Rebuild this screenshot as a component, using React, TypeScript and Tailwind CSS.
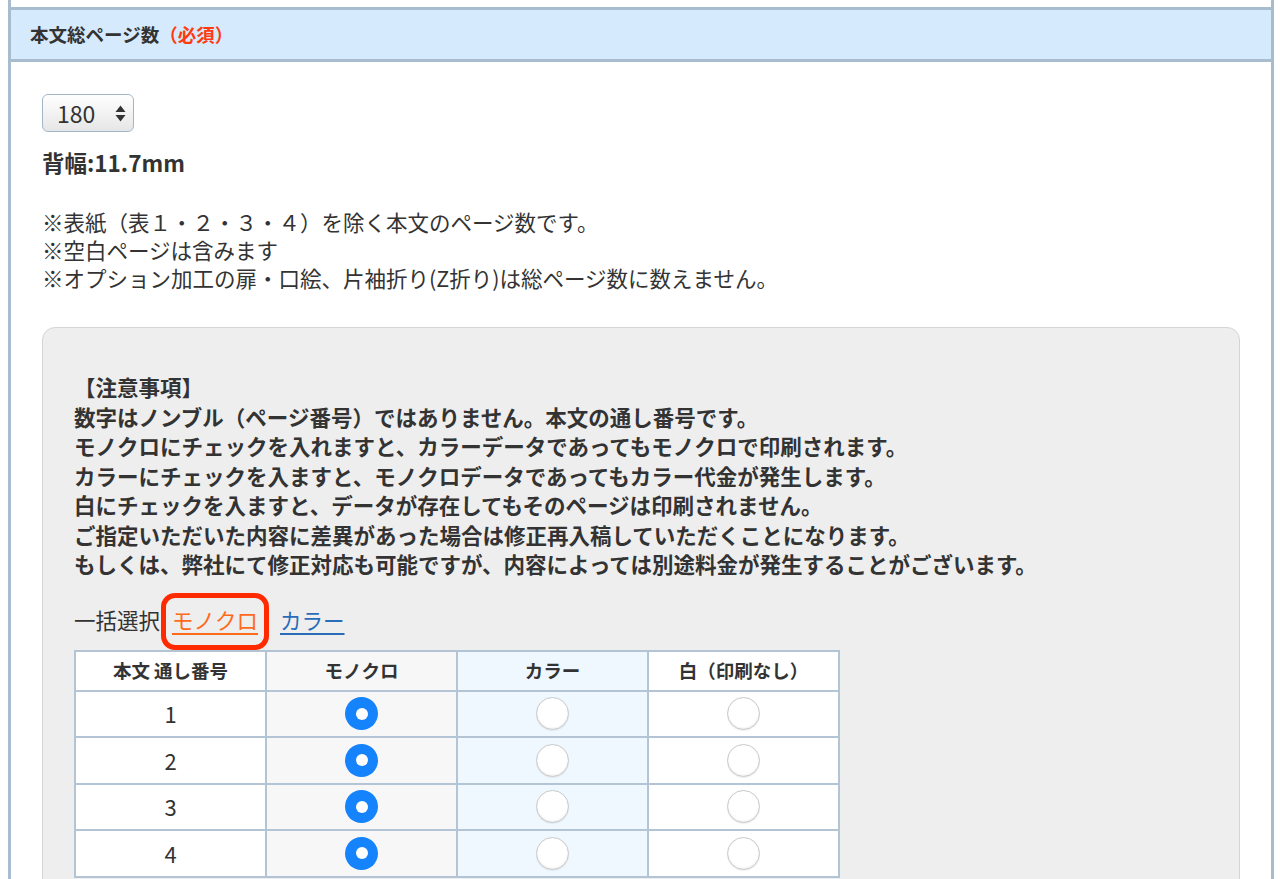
import clsx from 'clsx';

const notes = [
  '※表紙（表１・２・３・４）を除く本文のページ数です。',
  '※空白ページは含みます',
  '※オプション加工の扉・口絵、片袖折り(Z折り)は総ページ数に数えません。',
];

const cautions = [
  '【注意事項】',
  '数字はノンブル（ページ番号）ではありません。本文の通し番号です。',
  'モノクロにチェックを入れますと、カラーデータであってもモノクロで印刷されます。',
  'カラーにチェックを入ますと、モノクロデータであってもカラー代金が発生します。',
  '白にチェックを入ますと、データが存在してもそのページは印刷されません。',
  'ご指定いただいた内容に差異があった場合は修正再入稿していただくことになります。',
  'もしくは、弊社にて修正対応も可能ですが、内容によっては別途料金が発生することがございます。',
];

const columns = [
  { label: '本文 通し番号', bg: 'bg-white' },
  { label: 'モノクロ', bg: 'bg-[#f7f7f7]' },
  { label: 'カラー', bg: 'bg-[#eff7ff]' },
  { label: '白（印刷なし）', bg: 'bg-white' },
];

export default function App() {
  return (
    <div className="min-h-screen bg-white font-['Noto_Sans_CJK_JP','Hiragino_Sans',sans-serif] text-[#333]">
      <div className="ml-2 mr-[6px] border-x-[3px] border-[#a9bccd]">
        <div className="h-[7px] bg-white" />
        <div className="flex h-[55px] items-center border-y-[3px] border-[#a9bccd] bg-[#d6eafd] px-[19px] text-[18.5px] font-bold">
          本文総ページ数<span className="text-[#ff3a10]">（必須）</span>
        </div>
        <div className="px-[31px] pb-10 pt-8">
          <PageSelect value="180" />
          <div className="mt-[15px] text-[22.5px] font-bold leading-[30px]">背幅:11.7mm</div>
          <div className="mt-[31px] text-[21.5px] leading-[28px]">
            {notes.map(n => (
              <div key={n}>{n}</div>
            ))}
          </div>
          <CautionBox />
        </div>
      </div>
    </div>
  );
}

function PageSelect(props: { value: string }) {
  return (
    <div className="flex h-[38px] w-[92px] items-center justify-between rounded-[6px] border border-[#a3b6c8] bg-gradient-to-b from-white to-[#e6e6e6] pl-[14px] pr-[7px] shadow-[inset_0_1px_0_white]">
      <span className="text-[23px] leading-none">{props.value}</span>
      <svg width="11" height="17" viewBox="0 0 11 17" className="text-[#333]">
        <path d="M5.5 0.5 L10.5 7 L0.5 7 Z" fill="currentColor" />
        <path d="M0.5 10 L10.5 10 L5.5 16.5 Z" fill="currentColor" />
      </svg>
    </div>
  );
}

function CautionBox() {
  return (
    <div className="mt-[35px] rounded-[13px] border border-[#d5d5d5] bg-[#eeeeee] px-[31px] pb-10 pt-[44px]">
      <div className="text-[21.5px] font-bold leading-[29.5px]">
        {cautions.map(c => (
          <div key={c}>{c}</div>
        ))}
      </div>
      <div className="mt-[27px] flex items-center text-[21.5px] leading-[28px]">
        <span>一括選択:</span>
        <span className="relative ml-[6px]">
          <a href="#" className="text-[#ff6a1a] underline underline-offset-[4px]">
            モノクロ
          </a>
          <span className="pointer-events-none absolute -inset-x-[11px] -bottom-[16px] -top-[13px] rounded-[14px] border-[5px] border-[#ff2a00]" />
        </span>
        <a href="#" className="ml-[22px] text-[#2a6cba] underline underline-offset-[4px]">
          カラー
        </a>
      </div>
      <table className="mt-[16px] w-[766px] table-fixed border-collapse">
        <thead>
          <tr className="h-[40px]">
            {columns.map(col => (
              <th
                key={col.label}
                className={clsx('border-2 border-[#b3c4d5] text-[18.5px] font-bold', col.bg)}
              >
                {col.label}
              </th>
            ))}
          </tr>
        </thead>
        <tbody>
          {[1, 2, 3, 4].map(n => (
            <tr key={n} className="h-[46.5px]">
              <td className="border-2 border-[#b3c4d5] bg-white text-center text-[22px]">{n}</td>
              <td className="border-2 border-[#b3c4d5] bg-[#f7f7f7]">
                <Radio checked />
              </td>
              <td className="border-2 border-[#b3c4d5] bg-[#eff7ff]">
                <Radio />
              </td>
              <td className="border-2 border-[#b3c4d5] bg-white">
                <Radio />
              </td>
            </tr>
          ))}
        </tbody>
      </table>
    </div>
  );
}

function Radio(props: { checked?: boolean }) {
  if (props.checked) {
    return (
      <div className="mx-auto flex h-[33px] w-[33px] items-center justify-center rounded-full bg-[#1583fb]">
        <div className="h-[12px] w-[12px] rounded-full bg-white" />
      </div>
    );
  }
  return (
    <div className="mx-auto h-[33px] w-[33px] rounded-full border border-[#c9c9c9] bg-white shadow-[inset_0_-1px_2px_rgba(0,0,0,0.08),0_1px_1px_rgba(0,0,0,0.06)]" />
  );
}
